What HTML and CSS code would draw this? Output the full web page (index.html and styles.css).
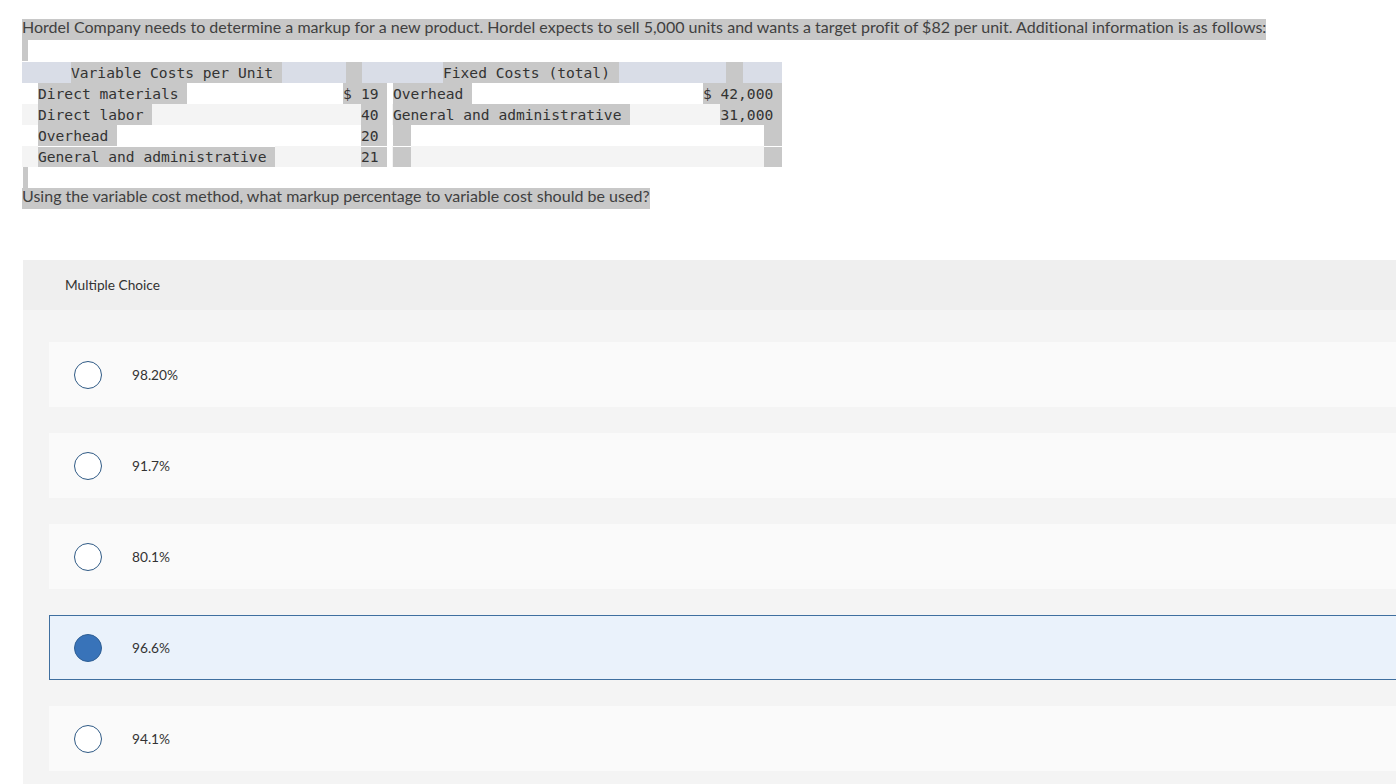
FILE: index.html
```html
<!DOCTYPE html>
<html>
<head>
<meta charset="utf-8">
<link rel="stylesheet" href="styles.css">
</head>
<body>
<div class="question">
  <p class="line"><span class="sel">Hordel Company needs to determine a markup for a new product. Hordel expects to sell 5,000 units and wants a target profit of $82 per unit. Additional information is as follows:</span></p>
  <div class="bar"></div>
  <div class="tbl">
    <div class="row head">
      <div class="h1"><span class="sel">Variable Costs per Unit </span></div>
      <div class="hgap sel"></div>
      <div class="h2"><span class="sel">Fixed Costs (total) </span></div>
      <div class="hgap2 sel"></div>
    </div>
    <div class="row">
      <div class="c1"><span class="sel">Direct materials </span></div>
      <div class="c2"><span class="sel">$ </span></div>
      <div class="c3"><span class="sel">19 </span></div>
      <div class="gap"></div>
      <div class="c4"><span class="sel">Overhead </span></div>
      <div class="c5"><span class="sel">$ 42,000 </span></div>
    </div>
    <div class="row alt">
      <div class="c1"><span class="sel">Direct labor </span></div>
      <div class="c2"></div>
      <div class="c3"><span class="sel">40 </span></div>
      <div class="gap"></div>
      <div class="c4"><span class="sel">General and administrative </span></div>
      <div class="c5"><span class="sel">31,000 </span></div>
    </div>
    <div class="row">
      <div class="c1"><span class="sel">Overhead </span></div>
      <div class="c2"></div>
      <div class="c3"><span class="sel">20 </span></div>
      <div class="gap"></div>
      <div class="c4"><span class="sel">&nbsp; </span></div>
      <div class="c5"><span class="sel">&nbsp; </span></div>
    </div>
    <div class="row alt last">
      <div class="c1"><span class="sel">General and administrative </span></div>
      <div class="c2"></div>
      <div class="c3"><span class="sel">21 </span></div>
      <div class="gap"></div>
      <div class="c4"><span class="sel">&nbsp; </span></div>
      <div class="c5"><span class="sel">&nbsp; </span></div>
    </div>
  </div>
  <div class="bar bar2"></div>
  <p class="line"><span class="sel">Using the variable cost method, what markup percentage to variable cost should be used?</span></p>
</div>

<div class="mc">
  <div class="mc-head">Multiple Choice</div>
  <div class="mc-body">
    <div class="opt"><span class="radio"></span><span class="label">98.20%</span></div>
    <div class="opt"><span class="radio"></span><span class="label">91.7%</span></div>
    <div class="opt"><span class="radio"></span><span class="label">80.1%</span></div>
    <div class="opt selected"><span class="radio"></span><span class="label">96.6%</span></div>
    <div class="opt"><span class="radio"></span><span class="label">94.1%</span></div>
  </div>
</div>
</body>
</html>
```

FILE: styles.css
```css
html, body {
  margin: 0;
  padding: 0;
  overflow: hidden;
  background: #ffffff;
}
body {
  width: 1396px;
  height: 784px;
  font-family: "Lato", "Open Sans", sans-serif;
  color: #333333;
}
.question {
  padding: 19px 0 0 22px;
}
.sel {
  background: #c8c8c8;
}
.line {
  margin: 0;
  font-size: 16px;
  letter-spacing: 0.02px;
  line-height: 21px;
  height: 21px;
  white-space: nowrap;
  color: #404040;
}
.line .sel {
  display: inline-block;
  height: 21px;
  line-height: 16px;
  vertical-align: top;
}
.bar {
  width: 6px;
  height: 21px;
  background: #c8c8c8;
}
.tbl {
  width: 760px;
  margin-top: 1px;
  font-family: "DejaVu Sans Mono", "Liberation Mono", monospace;
  font-size: 14.6px;
  color: #333333;
}
.row {
  display: flex;
  height: 21px;
  line-height: 21px;
  white-space: pre;
  background: #ffffff;
}
.row.alt {
  background: #f4f4f4;
}
.row.head {
  background: #d9dde7;
}
.row > div {
  height: 21px;
}
.row .sel {
  display: inline-block;
  height: 21px;
}
.h1 {
  width: 275px;
  padding-left: 49px;
}
.hgap {
  width: 16px;
}
.h2 {
  width: 283px;
  padding-left: 81px;
}
.hgap2 {
  width: 17px;
}
.c1 {
  width: 305px;
  padding-left: 16px;
}
.c2 {
  width: 18px;
}
.c3 {
  width: 26px;
}
.gap {
  width: 5px;
  background: #ffffff;
}
.c4 {
  width: 310px;
  padding-left: 1px;
}
.c5 {
  flex: 1;
  text-align: right;
}
.row.last .sel {
  box-sizing: border-box;
  border-top: 1px solid #ffffff;
  line-height: 20px;
}
.bar2 {
  width: 5px;
  margin-left: 1px;
}

.mc {
  margin: 51px 0 0 23px;
  width: 1420px;
  background: #f4f4f4;
  height: 600px;
}
.mc-head {
  height: 50px;
  line-height: 50px;
  background: #efefef;
  padding-left: 42px;
  font-size: 13.7px;
  color: #333333;
}
.mc-body {
  padding: 32px 0 0 26px;
  display: flex;
  flex-direction: column;
  gap: 26px;
}
.opt {
  height: 65px;
  background: #fafafa;
  display: flex;
  align-items: center;
  box-sizing: border-box;
  padding-left: 25px;
  border: 1px solid transparent;
}
.opt .radio {
  width: 28px;
  height: 28px;
  box-sizing: border-box;
  border-radius: 50%;
  border: 1.5px solid #2f5a85;
  background: #ffffff;
  margin-left: -1px;
}
.opt .label {
  margin-left: 30px;
  font-size: 13.7px;
  color: #333333;
}
.opt.selected {
  background: #eaf2fb;
  border-color: #3f6f9f;
}
.opt.selected .radio {
  background: #3873b9;
  border-color: #2f5f94;
}
```
